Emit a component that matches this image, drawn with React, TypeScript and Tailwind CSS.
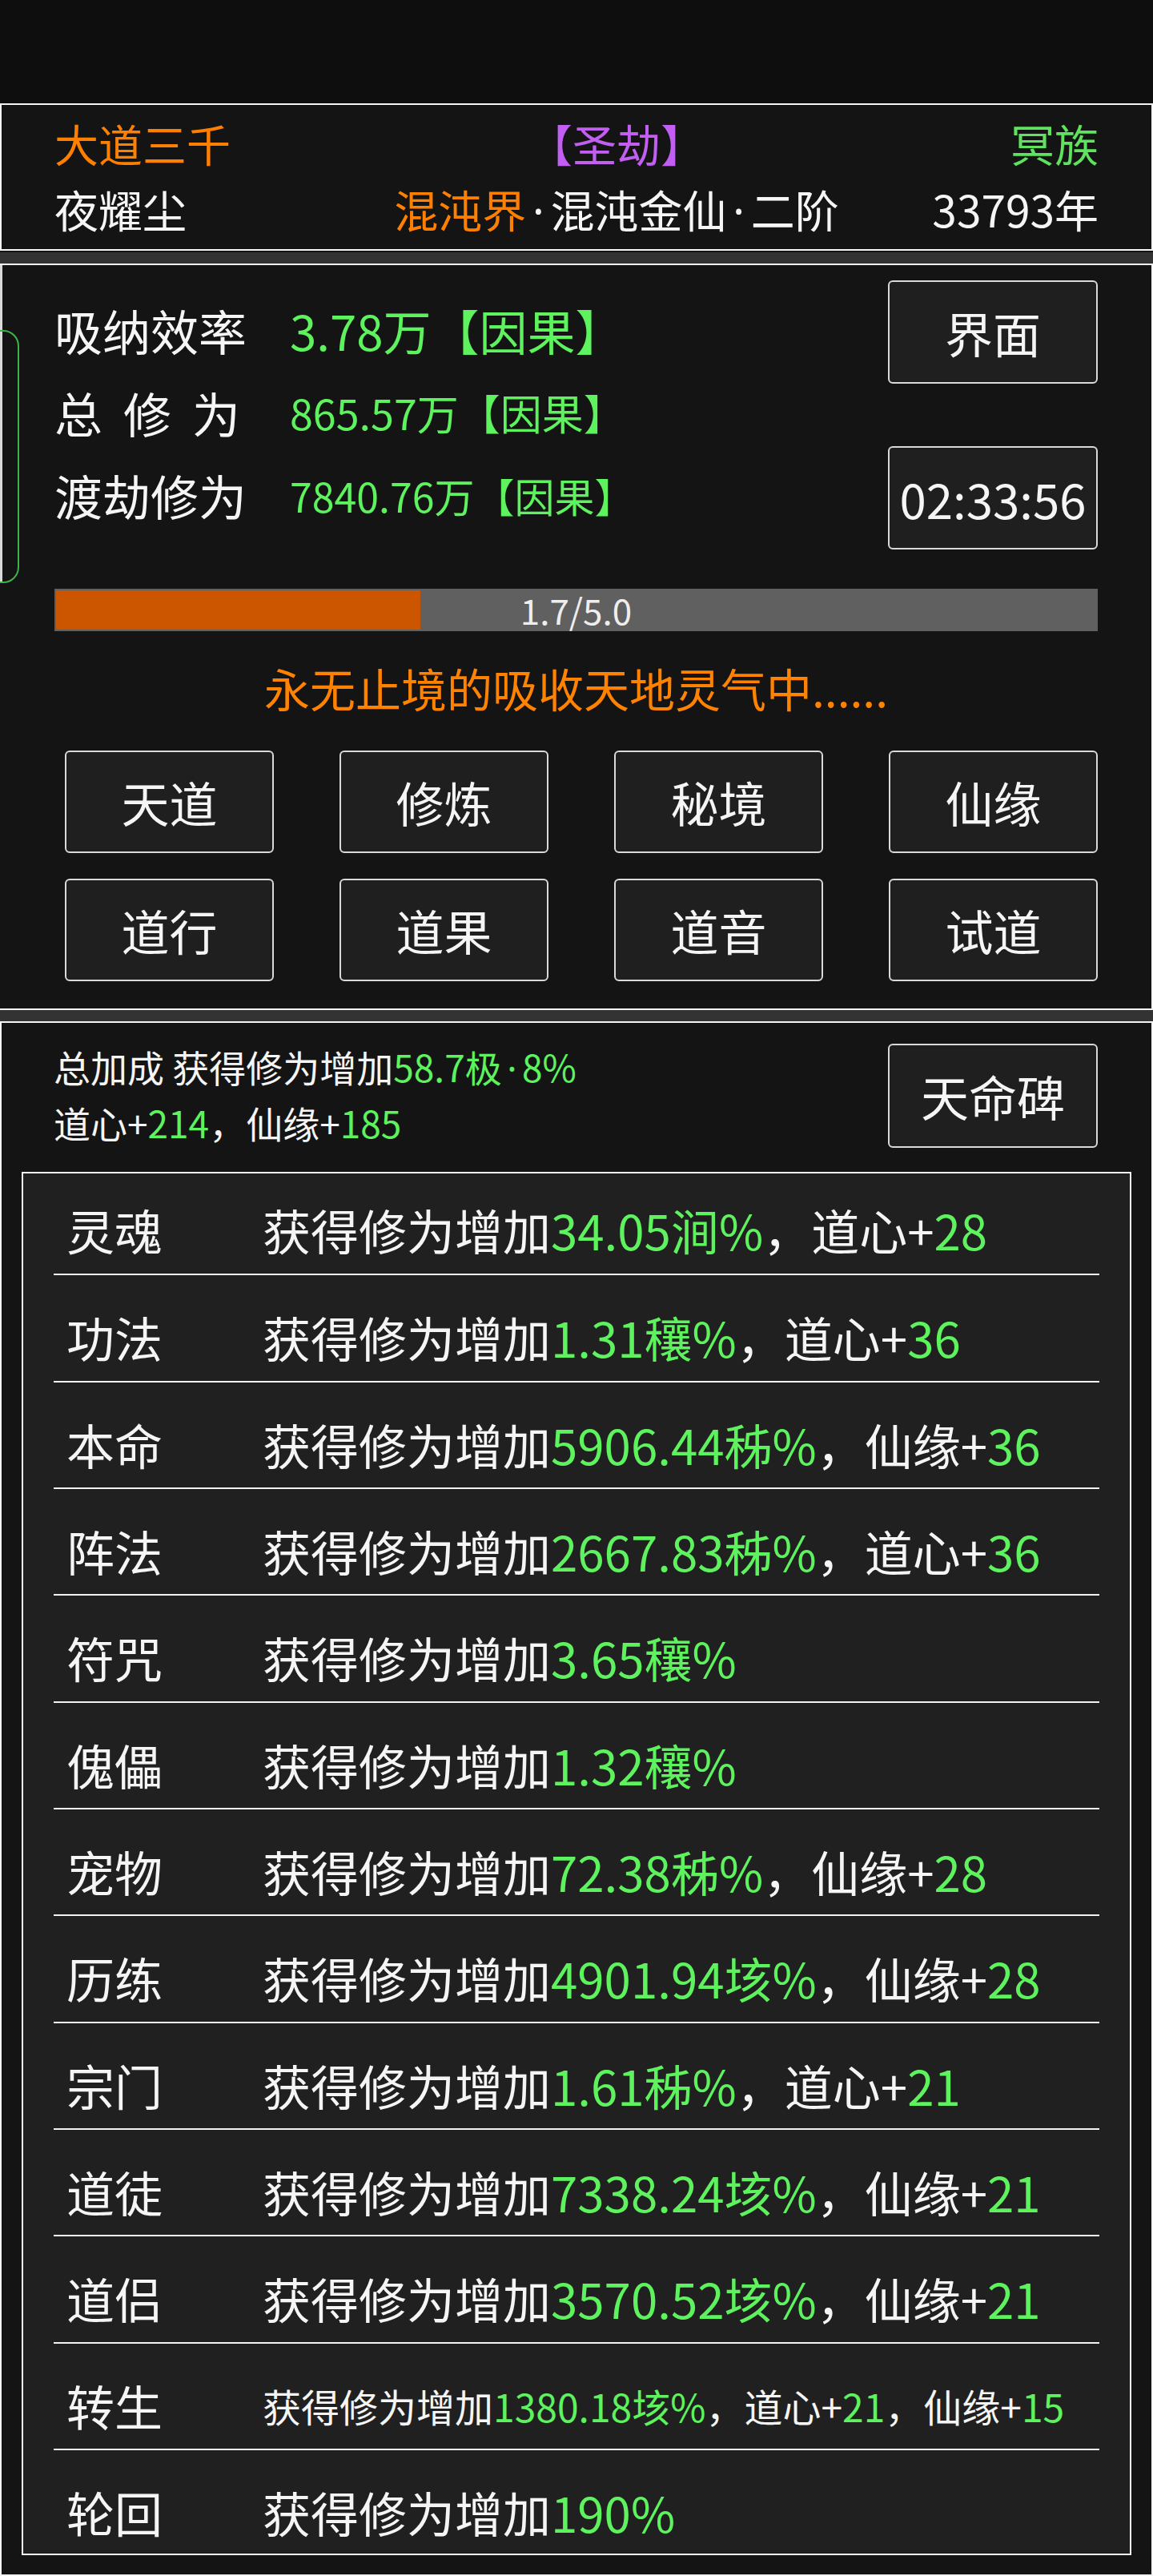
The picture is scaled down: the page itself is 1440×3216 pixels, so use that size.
type Part = [string, boolean];

interface BonusRow {
  label: string;
  parts: Part[];
  small?: boolean;
}

const rows: BonusRow[] = [
  { label: "灵魂", parts: [["获得修为增加", false], ["34.05涧%", true], ["，道心+", false], ["28", true]] },
  { label: "功法", parts: [["获得修为增加", false], ["1.31穰%", true], ["，道心+", false], ["36", true]] },
  { label: "本命", parts: [["获得修为增加", false], ["5906.44秭%", true], ["，仙缘+", false], ["36", true]] },
  { label: "阵法", parts: [["获得修为增加", false], ["2667.83秭%", true], ["，道心+", false], ["36", true]] },
  { label: "符咒", parts: [["获得修为增加", false], ["3.65穰%", true]] },
  { label: "傀儡", parts: [["获得修为增加", false], ["1.32穰%", true]] },
  { label: "宠物", parts: [["获得修为增加", false], ["72.38秭%", true], ["，仙缘+", false], ["28", true]] },
  { label: "历练", parts: [["获得修为增加", false], ["4901.94垓%", true], ["，仙缘+", false], ["28", true]] },
  { label: "宗门", parts: [["获得修为增加", false], ["1.61秭%", true], ["，道心+", false], ["21", true]] },
  { label: "道徒", parts: [["获得修为增加", false], ["7338.24垓%", true], ["，仙缘+", false], ["21", true]] },
  { label: "道侣", parts: [["获得修为增加", false], ["3570.52垓%", true], ["，仙缘+", false], ["21", true]] },
  {
    label: "转生",
    small: true,
    parts: [["获得修为增加", false], ["1380.18垓%", true], ["，道心+", false], ["21", true], ["，仙缘+", false], ["15", true]],
  },
  { label: "轮回", parts: [["获得修为增加", false], ["190%", true]] },
];

const actions = ["天道", "修炼", "秘境", "仙缘", "道行", "道果", "道音", "试道"];

function Btn({ children, className = "" }: { children: React.ReactNode; className?: string }) {
  return (
    <div
      className={`flex items-center justify-center rounded-[6px] border-2 border-[#d9d9d9] bg-[#1f1f1f] text-[#f5f5f5] ${className}`}
    >
      {children}
    </div>
  );
}

// narrow middle dot (the CJK font draws it full width)
function Dot() {
  return <span className="mx-[0.14em] font-['Noto_Sans',sans-serif]">·</span>;
}

function Parts({ parts }: { parts: Part[] }) {
  return (
    <>
      {parts.map(([t, green], i) => (
        <span key={i} className={green ? "text-[#5ef25e]" : "text-[#f5f5f5]"}>
          {t}
        </span>
      ))}
    </>
  );
}

export default function App() {
  return (
    <div className="w-[1440px] h-[3216px] bg-[#0e0e0e] font-['Noto_Sans_CJK_SC',sans-serif] text-[#f5f5f5]">
      {/* status area */}
      <div className="h-[129px] bg-[#0e0e0e]" />

      {/* header */}
      <section className="h-[184px] border-2 border-[#f5f5f5] bg-[#141414] px-[66px] pt-[6px] text-[55px] leading-[82px]">
        <div className="flex">
          <div className="w-[350px] text-[#ff8000]">大道三千</div>
          <div className="flex-1 text-center text-[#c25ff2]">【圣劫】</div>
          <div className="w-[250px] text-right text-[#5fe35f]">冥族</div>
        </div>
        <div className="flex">
          <div className="w-[350px]">夜耀尘</div>
          <div className="flex-1 text-center">
            <span className="text-[#ff8000]">混沌界</span>
            <Dot />
            混沌金仙
            <Dot />
            二阶
          </div>
          <div className="w-[250px] text-right">33793年</div>
        </div>
      </section>

      <div className="h-[16px] border-t-2 border-[#141414] bg-[#333333]" />

      {/* cultivation panel */}
      <section className="relative h-[932px] overflow-hidden border-2 border-l-0 border-[#f5f5f5] bg-[#141414] pl-[68px] pr-[67px] pt-[19px]">
        <div className="absolute left-0 top-0 h-[397px] w-[3px] bg-[#d9d9d9]" />
        <div className="absolute left-[-40px] top-[81px] h-[316px] w-[64px] rounded-[20px] border-2 border-[#3cb449]" />

        <div className="flex justify-between">
          <div className="flex flex-col pt-[10px]">
            <div className="flex h-[103px] items-center">
              <span className="w-[294px] text-[60px] leading-none">吸纳效率</span>
              <span className="text-[60px] leading-none text-[#5ef25e]">3.78万【因果】</span>
            </div>
            <div className="flex h-[103px] items-center">
              <span className="w-[294px] text-[60px] leading-none tracking-[26px]">总修为</span>
              <span className="text-[52px] leading-none text-[#5ef25e]">865.57万【因果】</span>
            </div>
            <div className="flex h-[103px] items-center">
              <span className="w-[294px] text-[60px] leading-none">渡劫修为</span>
              <span className="text-[50px] leading-none text-[#5ef25e]">7840.76万【因果】</span>
            </div>
          </div>
          <div className="flex w-[262px] flex-col gap-[78px]">
            <Btn className="h-[129px] text-[60px]">界面</Btn>
            <Btn className="h-[129px] text-[60px]">02:33:56</Btn>
          </div>
        </div>

        {/* progress */}
        <div className="relative mt-[49px] h-[53px] bg-[#606060] p-[2px]">
          <div className="h-full w-[35%] bg-[#cc5500]" />
          <span className="absolute inset-0 flex items-center justify-center pb-[2px] text-[44px] leading-none text-[#eeeeee]">
            1.7/5.0
          </span>
        </div>

        <p className="mt-[39px] text-center text-[57px] leading-[62px] text-[#ff8200]">
          永无止境的吸收天地灵气中......
        </p>

        <div className="ml-[13px] mt-[48px] grid grid-cols-4 gap-x-[82px] gap-y-[32px]">
          {actions.map((a) => (
            <Btn key={a} className="h-[128px] text-[60px]">
              {a}
            </Btn>
          ))}
        </div>
      </section>

      <div className="h-[14px] bg-[#333333]" />

      {/* bonus panel */}
      <section className="h-[1941px] border-2 border-[#f5f5f5] bg-[#141414] px-[25px]">
        <div className="flex justify-between pl-[40px] pr-[42px]">
          <div className="pt-[20px] text-[46px] leading-[68px]">
            <div>
              总加成 获得修为增加
              <span className="text-[#5ef25e]">
                58.7极
                <Dot />
                8%
              </span>
            </div>
            <div>
              道心+<span className="text-[#5ef25e]">214</span>，仙缘+<span className="text-[#5ef25e]">185</span>
            </div>
          </div>
          <Btn className="mt-[26px] h-[130px] w-[262px] text-[60px]">天命碑</Btn>
        </div>

        <div className="mt-[28px] border-2 border-[#f5f5f5] bg-[#202020] px-[38px]">
          {rows.map((r, i) => {
            const first = i === 0;
            const last = i === rows.length - 1;
            const h = first ? "h-[127.33px] pt-[25px]" : last ? "h-[129.33px] pt-[32px]" : "h-[133.33px] pt-[32px]";
            return (
              <div
                key={r.label}
                className={`flex pl-[16px] leading-[90px] ${h} ${last ? "" : "border-b-2 border-[#f2f2f2]"}`}
              >
                <span className="w-[245px] shrink-0 text-[60px]">{r.label}</span>
                <span className={r.small ? "text-[48px]" : "text-[60px]"}>
                  <Parts parts={r.parts} />
                </span>
              </div>
            );
          })}
        </div>
      </section>
    </div>
  );
}
